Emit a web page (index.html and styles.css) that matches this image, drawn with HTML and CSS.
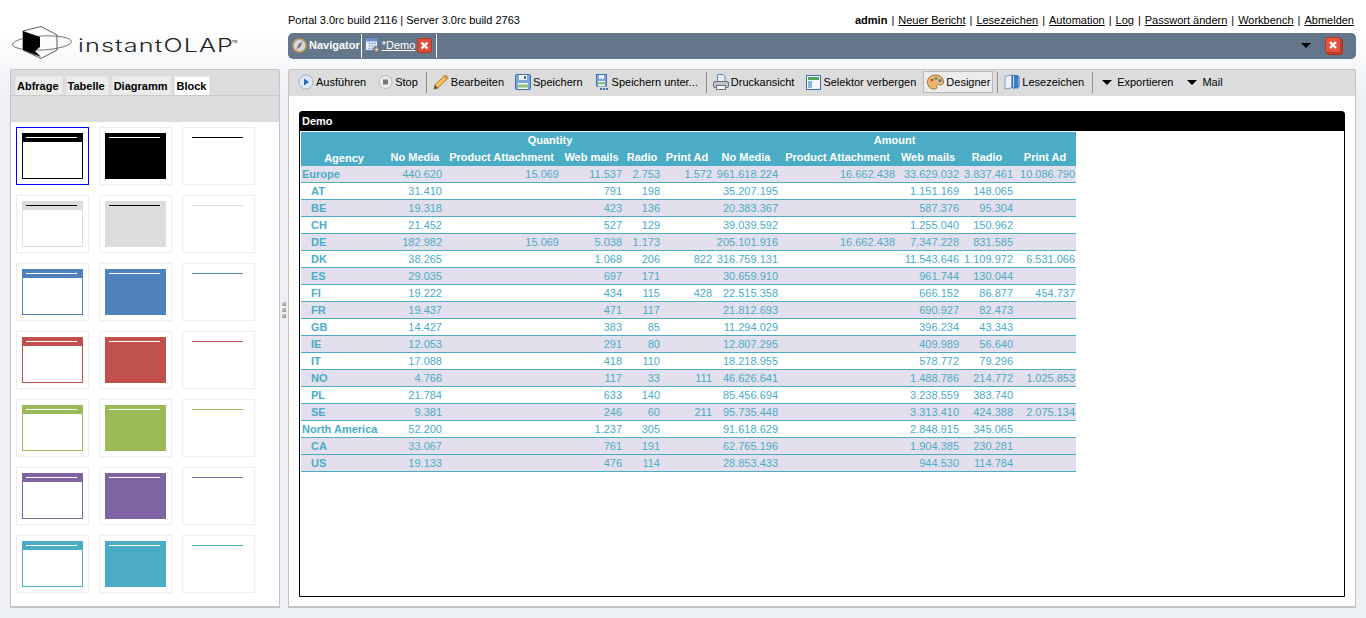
FILE: index.html
```html
<!DOCTYPE html>
<html lang="de">
<head>
<meta charset="utf-8">
<title>instantOLAP</title>
<link rel="stylesheet" href="styles.css">
</head>
<body>
<div class="app">
  <div class="logo">
    <svg class="logo-mark" width="62" height="36" viewBox="0 0 62 36">
      <path d="M11 5 L29 0.5 L45 9 L45 24 L29 32.5 L11 24 Z" fill="none" stroke="#333" stroke-width="0.8"/>
      <ellipse cx="30" cy="17" rx="29.5" ry="7" fill="none" stroke="#555" stroke-width="0.8" transform="rotate(-3 30 17)"/>
      <path d="M11 5 L28 11 L28 21 L23 25 L29 31 L11 24 Z" fill="#000"/>
    </svg>
    <span class="logo-text">instantOLAP</span><span class="logo-tm">TM</span>
  </div>
  <div class="head">
    <div class="topline">
      <span>Portal 3.0rc build 2116 | Server 3.0rc build 2763</span>
      <nav class="links">
        <b>admin</b><i class="sep">|</i><a href="#">Neuer Bericht</a><i class="sep">|</i><a href="#">Lesezeichen</a><i class="sep">|</i><a href="#">Automation</a><i class="sep">|</i><a href="#">Log</a><i class="sep">|</i><a href="#">Passwort ändern</a><i class="sep">|</i><a href="#">Workbench</a><i class="sep">|</i><a href="#">Abmelden</a>
      </nav>
    </div>
    <div class="navbar">
      <svg class="nav-ico" width="15" height="15" viewBox="0 0 15 15"><circle cx="7.5" cy="7.5" r="6.5" fill="#cfd8e6" stroke="#c79a52" stroke-width="1.6"/><path d="M10.5 3.5 L8.5 8.5 L4.5 11.5 L6.5 6.5 Z" fill="#8a6a3a"/></svg>
      <span class="nav-title">Navigator</span>
      <i class="nav-sep"></i>
      <svg class="nav-ico2" width="15" height="16" viewBox="0 0 15 16"><rect x="0.5" y="1.5" width="12" height="12" fill="#eef3fb" stroke="#5c7fb8"/><rect x="0.5" y="1.5" width="12" height="3" fill="#6f93c9"/><path d="M3 6.5h8M3 9h8M3 11.5h8M4.5 5v8M7.5 5v8M10 5v8" stroke="#9fb4d6" stroke-width="0.8"/><circle cx="11.5" cy="12.5" r="3" fill="#9a9a9a" stroke="#666"/><circle cx="11.5" cy="12.5" r="1" fill="#ddd"/></svg>
      <a class="nav-tab" href="#">*Demo</a>
      <svg class="close" width="15" height="15" viewBox="0 0 15 15"><rect x="0.5" y="0.5" width="14" height="14" rx="1.5" fill="#dd4b39" stroke="#b5392a"/><path d="M4.5 4.5 L10.5 10.5 M10.5 4.5 L4.5 10.5" stroke="#fff" stroke-width="2.4"/></svg>
      <i class="nav-sep sep-b"></i>
      <i class="arrow nav-arrow"></i>
      <svg class="close-big" width="18" height="18" viewBox="0 0 18 18"><rect x="2.5" y="2.5" width="15" height="15" rx="1.5" fill="#c9402f" stroke="#a5321f"/><rect x="0.5" y="0.5" width="15" height="15" rx="1.5" fill="#e2553f" stroke="#b5392a"/><path d="M5 5 L11 11 M11 5 L5 11" stroke="#fff" stroke-width="2.4"/></svg>
    </div>
  </div>

  <aside class="panel side">
    <div class="tabs">
      <span class="tab">Abfrage</span><span class="tab">Tabelle</span><span class="tab">Diagramm</span><span class="tab on">Block</span>
    </div>
    <div class="subbar"></div>
    <div class="thumbs">
      <div class="thumb picked k-black"><div class="mini frame"><i></i></div></div>
      <div class="thumb k-black"><div class="mini solid"><i></i></div></div>
      <div class="thumb k-black"><div class="mini line"><i></i></div></div>
      <div class="thumb k-gray"><div class="mini frame"><i></i></div></div>
      <div class="thumb k-gray"><div class="mini solid"><i></i></div></div>
      <div class="thumb k-gray"><div class="mini line"><i></i></div></div>
      <div class="thumb k-blue"><div class="mini frame"><i></i></div></div>
      <div class="thumb k-blue"><div class="mini solid"><i></i></div></div>
      <div class="thumb k-blue"><div class="mini line"><i></i></div></div>
      <div class="thumb k-red"><div class="mini frame"><i></i></div></div>
      <div class="thumb k-red"><div class="mini solid"><i></i></div></div>
      <div class="thumb k-red"><div class="mini line"><i></i></div></div>
      <div class="thumb k-green"><div class="mini frame"><i></i></div></div>
      <div class="thumb k-green"><div class="mini solid"><i></i></div></div>
      <div class="thumb k-green"><div class="mini line"><i></i></div></div>
      <div class="thumb k-violet"><div class="mini frame"><i></i></div></div>
      <div class="thumb k-violet"><div class="mini solid"><i></i></div></div>
      <div class="thumb k-violet"><div class="mini line"><i></i></div></div>
      <div class="thumb k-teal"><div class="mini frame"><i></i></div></div>
      <div class="thumb k-teal"><div class="mini solid"><i></i></div></div>
      <div class="thumb k-teal"><div class="mini line"><i></i></div></div>
    </div>
  </aside>

  <div class="grip"><i></i><i></i><i></i></div>

  <main class="panel work">
    <div class="toolbar">
      <span class="tool"><svg width="16" height="16" viewBox="0 0 16 16"><circle cx="8" cy="8" r="7" fill="#dfe9f6" stroke="#9db6d8"/><path d="M6 4.5 L11 8 L6 11.5 Z" fill="#2f66ad"/></svg>Ausführen</span>
      <span class="tool"><svg width="15" height="16" viewBox="0 0 15 16"><circle cx="7.5" cy="8" r="6.5" fill="#ececec" stroke="#bbb"/><rect x="5" y="5.5" width="5" height="5" fill="#777"/></svg>Stop</span>
      <i class="tsep"></i>
      <span class="tool tight"><svg width="16" height="16" viewBox="0 0 16 16"><path d="M1 15 L2 11 L11 2 L14 5 L5 14 Z" fill="#f2c25c" stroke="#b9782a"/><path d="M11 2 L12.5 0.8 L15.2 3.5 L14 5 Z" fill="#e9906f" stroke="#b9782a" stroke-width="0.7"/><path d="M1 15 L2 11 L5 14 Z" fill="#5b4632"/></svg>Bearbeiten</span>
      <span class="tool"><svg width="16" height="16" viewBox="0 0 16 16"><rect x="0.5" y="0.5" width="15" height="15" rx="1" fill="#7ea6dc" stroke="#3f6db0"/><rect x="4" y="1" width="8" height="5" fill="#f4f7fb"/><rect x="9" y="2" width="2" height="3" fill="#3f6db0"/><rect x="3" y="9" width="10" height="6" fill="#f4f7fb"/><rect x="3" y="10.5" width="10" height="3" fill="#8cc47a"/></svg>Speichern</span>
      <span class="tool save-as"><svg width="14" height="16" viewBox="0 0 14 16"><rect x="1.5" y="0.5" width="10" height="11.5" fill="#7ea6dc" stroke="#3f6db0"/><rect x="4" y="1" width="5" height="3.5" fill="#f4f7fb"/><rect x="3" y="7" width="7" height="5" fill="#f4f7fb"/><rect x="3" y="8" width="7" height="2.5" fill="#8cc47a"/><path d="M5 14h2v2h-2zM8 14h2v2h-2zM11 14h2v2h-2z" fill="#3f6db0"/></svg>Speichern unter...</span>
      <i class="tsep"></i>
      <span class="tool"><svg width="16" height="16" viewBox="0 0 16 16"><path d="M4.5 0.5 H10 L12 2.5 V8 H4.5 Z" fill="#e6eefb" stroke="#5f86c2"/><rect x="0.5" y="7.5" width="15" height="6" rx="1.5" fill="#bfc3c9" stroke="#6d7278"/><rect x="3.5" y="11.5" width="9" height="4" fill="#f3f3f3" stroke="#6d7278"/></svg>Druckansicht</span>
      <span class="tool"><svg width="15" height="16" viewBox="0 0 15 16"><rect x="0.5" y="1.5" width="14" height="14" fill="#f4f8fd" stroke="#3f6db0"/><rect x="2" y="3" width="11" height="3" fill="#55a05a"/><rect x="2" y="7" width="4" height="7" fill="#8fb3e0"/></svg>Selektor verbergen</span>
      <span class="tool active"><svg width="17" height="16" viewBox="0 0 17 16"><path d="M8.5 1 C13.5 1 16.5 4 16.5 8 C16.5 11.5 13 11 11.5 10.5 C9.5 10 9.5 12.5 10 13 C10.5 14.5 8.5 15 7 15 C3 15 0.5 12 0.5 8 C0.5 4 4 1 8.5 1 Z" fill="#e8b77a" stroke="#a8702f"/><circle cx="5" cy="6" r="1.6" fill="#d94b3a"/><circle cx="9" cy="4.5" r="1.6" fill="#5ba34e"/><circle cx="13" cy="6.5" r="1.5" fill="#3f6db0"/><circle cx="4.5" cy="10.5" r="1.6" fill="#e0c23c"/></svg>Designer</span>
      <i class="tsep"></i>
      <span class="tool"><svg width="16" height="16" viewBox="0 0 16 16"><path d="M1 2.5 L7.5 1 V14 L1 15 Z" fill="#eaf1fb" stroke="#7d9cc8"/><path d="M8.5 1 L15 2.5 V13 L8.5 14 Z" fill="#cfe0f5" stroke="#3f6db0"/><path d="M10 1 H14 V15.5 L12 13.5 L10 15.5 Z" fill="#2f7fc4"/></svg>Lesezeichen</span>
      <i class="tsep"></i>
      <span class="tool menu first"><i class="arrow"></i>Exportieren</span>
      <span class="tool menu"><i class="arrow"></i>Mail</span>
    </div>
    <section class="block">
      <h2 class="block-title">Demo</h2>
      <table class="report">
        <colgroup><col class="c1"><col class="c2"><col class="c3"><col class="c4"><col class="c5"><col class="c6"><col class="c7"><col class="c3"><col class="c8"><col class="c9"><col class="c10"></colgroup>
        <thead>
          <tr><th rowspan="2" class="agency">Agency</th><th colspan="5">Quantity</th><th colspan="5">Amount</th></tr>
          <tr><th>No Media</th><th>Product Attachment</th><th>Web mails</th><th>Radio</th><th>Print Ad</th><th>No Media</th><th>Product Attachment</th><th>Web mails</th><th>Radio</th><th>Print Ad</th></tr>
        </thead>
        <tbody>
          <tr class="alt grp"><th>Europe</th><td>440.620</td><td>15.069</td><td>11.537</td><td>2.753</td><td>1.572</td><td>961.618.224</td><td>16.662.438</td><td>33.629.032</td><td>3.837.461</td><td>10.086.790</td></tr>
          <tr><th>AT</th><td>31.410</td><td></td><td>791</td><td>198</td><td></td><td>35.207.195</td><td></td><td>1.151.169</td><td>148.065</td><td></td></tr>
          <tr class="alt"><th>BE</th><td>19.318</td><td></td><td>423</td><td>136</td><td></td><td>20.383.367</td><td></td><td>587.376</td><td>95.304</td><td></td></tr>
          <tr><th>CH</th><td>21.452</td><td></td><td>527</td><td>129</td><td></td><td>39.039.592</td><td></td><td>1.255.040</td><td>150.962</td><td></td></tr>
          <tr class="alt"><th>DE</th><td>182.982</td><td>15.069</td><td>5.038</td><td>1.173</td><td></td><td>205.101.916</td><td>16.662.438</td><td>7.347.228</td><td>831.585</td><td></td></tr>
          <tr><th>DK</th><td>38.265</td><td></td><td>1.068</td><td>206</td><td>822</td><td>316.759.131</td><td></td><td>11.543.646</td><td>1.109.972</td><td>6.531.066</td></tr>
          <tr class="alt"><th>ES</th><td>29.035</td><td></td><td>697</td><td>171</td><td></td><td>30.659.910</td><td></td><td>961.744</td><td>130.044</td><td></td></tr>
          <tr><th>FI</th><td>19.222</td><td></td><td>434</td><td>115</td><td>428</td><td>22.515.358</td><td></td><td>666.152</td><td>86.877</td><td>454.737</td></tr>
          <tr class="alt"><th>FR</th><td>19.437</td><td></td><td>471</td><td>117</td><td></td><td>21.812.693</td><td></td><td>690.927</td><td>82.473</td><td></td></tr>
          <tr><th>GB</th><td>14.427</td><td></td><td>383</td><td>85</td><td></td><td>11.294.029</td><td></td><td>396.234</td><td>43.343</td><td></td></tr>
          <tr class="alt"><th>IE</th><td>12.053</td><td></td><td>291</td><td>80</td><td></td><td>12.807.295</td><td></td><td>409.989</td><td>56.640</td><td></td></tr>
          <tr><th>IT</th><td>17.088</td><td></td><td>418</td><td>110</td><td></td><td>18.218.955</td><td></td><td>578.772</td><td>79.296</td><td></td></tr>
          <tr class="alt"><th>NO</th><td>4.766</td><td></td><td>117</td><td>33</td><td>111</td><td>46.626.641</td><td></td><td>1.488.786</td><td>214.772</td><td>1.025.853</td></tr>
          <tr><th>PL</th><td>21.784</td><td></td><td>633</td><td>140</td><td></td><td>85.456.694</td><td></td><td>3.238.559</td><td>383.740</td><td></td></tr>
          <tr class="alt"><th>SE</th><td>9.381</td><td></td><td>246</td><td>60</td><td>211</td><td>95.735.448</td><td></td><td>3.313.410</td><td>424.388</td><td>2.075.134</td></tr>
          <tr class="grp"><th>North America</th><td>52.200</td><td></td><td>1.237</td><td>305</td><td></td><td>91.618.629</td><td></td><td>2.848.915</td><td>345.065</td><td></td></tr>
          <tr class="alt"><th>CA</th><td>33.067</td><td></td><td>761</td><td>191</td><td></td><td>62.765.196</td><td></td><td>1.904.385</td><td>230.281</td><td></td></tr>
          <tr class="alt"><th>US</th><td>19.133</td><td></td><td>476</td><td>114</td><td></td><td>28.853.433</td><td></td><td>944.530</td><td>114.784</td><td></td></tr>
        </tbody>
      </table>
    </section>
  </main>
</div>
</body>
</html>
```
FILE: styles.css
```css
* { box-sizing: border-box; }
html, body { margin: 0; height: 618px; overflow: hidden; }
body {
  font: 11px/14px "Liberation Sans", Arial, sans-serif;
  color: #000;
  background: linear-gradient(#fff 0, #fff 30px, #ecf0f5 100px);
}
i { font-style: normal; display: block; }
a { color: #000; }

.app {
  display: grid;
  grid-template-columns: 270px 8px 1fr;
  grid-template-rows: 69px 1fr;
  height: 618px;
  padding: 0 10px 10px;
}

/* header */
.logo {
  grid-column: 1 / 3;
  display: flex;
  align-items: flex-start;
  padding: 26px 0 0 2px;
}
.logo-mark { flex: none; }
.logo-text {
  flex: none;
  width: 154px;
  margin: 9px 0 0 4px;
  font: 300 18px/22px Inter, "Liberation Sans", sans-serif;
  letter-spacing: 0.8px;
  color: #222;
  white-space: nowrap;
  transform: scaleX(1.4);
  transform-origin: left center;
}
.logo-tm { font-size: 3.5px; line-height: 6px; margin: 13px 0 0 0; color: #555; font-weight: 700; }

.head { display: flex; flex-direction: column; }
.topline {
  height: 33px;
  display: flex;
  justify-content: space-between;
  align-items: flex-start;
  padding: 13px 2px 0 0;
}
.links { display: flex; }
.sep { margin: 0 4px; }
.navbar {
  height: 26px;
  background: #64778a;
  border-radius: 5px;
  display: flex;
  align-items: center;
  padding: 0 0 2px 4px;
  color: #fff;
  font-weight: 700;
}
.nav-title { margin-left: 2px; }
.nav-sep { width: 1px; height: 24px; margin: 2px 3px 0 1px; background: #fff; }
.sep-b { margin-left: 4px; }
.nav-ico2 { margin-right: 2px; }
.nav-tab { color: #fff; font-weight: 400; margin-right: 2px; }
.close { flex: none; }
.arrow {
  width: 0; height: 0;
  border: 5px solid transparent;
  border-top: 5px solid #000;
  border-bottom: 0;
}
.nav-arrow { margin-left: auto; margin-right: 14px; }
.close-big { margin: 2px 13px 0 0; }

/* panels */
.panel { background: #fff; border: 1px solid #c4c4c4; border-bottom-width: 2px; border-radius: 2px 2px 0 0; min-height: 0; }
.side { display: flex; flex-direction: column; }
.tabs {
  height: 26px;
  background: #dcdcdc;
  border-bottom: 1px solid #cbcbcb;
  display: flex;
  align-items: flex-end;
  gap: 3px;
  padding-left: 4px;
}
.tab {
  height: 19px;
  padding: 2px 3px 0 1px;
  background: #ebebeb;
  border: 1px solid #e4e4e4;
  border-bottom: 0;
  font-weight: 700;
}
.tab.on { background: #fff; }
.subbar { height: 26px; background: #dcdcdc; }
.thumbs {
  display: grid;
  grid-template-columns: repeat(3, 73px);
  grid-auto-rows: 58px;
  gap: 10px;
  padding: 5px 0 0 5px;
}
.thumb { border: 1px solid #eee; padding: 5px; }
.thumb.picked { border-color: #00f; }
.mini { width: 61px; height: 46px; }
.mini i { width: 51px; height: 1px; margin-left: 4px; }
.mini.frame { border: 1px solid var(--c); background: linear-gradient(var(--c) 8px, #fff 8px); padding-top: 3px; }
.mini.frame i { margin-left: 3px; background: var(--l); }
.mini.solid { background: var(--c); padding-top: 4px; }
.mini.solid i { background: var(--l); }
.mini.line { padding-top: 4px; }
.mini.line i { background: var(--c); }
.k-black { --c: #000; --l: #fff; }
.k-gray { --c: #dcdcdc; --l: #000; }
.k-blue { --c: #4f81bd; --l: #fff; }
.k-red { --c: #c0504d; --l: #fff; }
.k-green { --c: #9bbb59; --l: #fff; }
.k-violet { --c: #8064a2; --l: #fff; }
.k-teal { --c: #4bacc6; --l: #fff; }

.grip { display: flex; flex-direction: column; align-items: center; justify-content: center; gap: 2px; padding-bottom: 58px; }
.grip i { width: 4px; height: 4px; background: linear-gradient(135deg, #ddd, #888); }

/* toolbar */
.work { display: flex; flex-direction: column; min-width: 0; }
.toolbar {
  height: 26px;
  flex: none;
  background: #dcdcdc;
  display: flex;
  align-items: center;
  padding: 0 0 2px 9px;
}
.tool { display: flex; align-items: center; gap: 2px; margin-right: 12px; white-space: nowrap; }
.tool.tight { margin-right: 11px; }
.tool svg { flex: none; }
.tool.save-as { gap: 3px; }
.tool.active {
  height: 22px;
  margin: 0 8px 0 -5px;
  padding: 0 2px 0 3px;
  background: #ececec;
  border: 1px solid #fff;
  outline: 1px solid #b8b8b8;
  outline-offset: -1px;
}
.tsep { width: 1px; height: 21px; background: #8f8f8f; margin: 0 6px 0 -4px; }
.tool.menu { gap: 5px; margin-right: 14px; }
.tool.menu.first { margin-left: 3px; }

/* report block */
.block {
  flex: none;
  height: 486px;
  margin: 15px 10px 0;
  border: 1px solid #000;
  border-radius: 3px 3px 0 0;
}
.block-title {
  margin: 0 0 1px;
  height: 19px;
  background: #000;
  color: #fff;
  font: 700 11px/19px "Liberation Sans", Arial, sans-serif;
  padding-left: 2px;
}
.report { table-layout: fixed; width: 775px; margin-left: 1px; border-collapse: separate; border-spacing: 0; color: #4bacc6; }
.c1 { width: 86px; } .c2 { width: 56px; } .c3 { width: 117px; } .c4 { width: 63px; } .c5 { width: 38px; }
.c6 { width: 52px; } .c7 { width: 66px; } .c8 { width: 64px; } .c9 { width: 54px; } .c10 { width: 62px; }
.report thead th { background: #4bacc6; color: #fff; height: 17px; padding: 0 0 1px; text-align: center; white-space: nowrap; font-weight: 700; }
.report .agency { vertical-align: bottom; padding-bottom: 1px; }
.report tbody th, .report tbody td { height: 17px; padding: 0; border-bottom: 1px solid #4bacc6; white-space: nowrap; }
.report tbody th { text-align: left; padding-left: 10px; font-weight: 700; }
.report tbody td { text-align: right; padding-right: 1px; font-weight: 400; }
.report .grp th { padding-left: 1px; }
.report .alt th, .report .alt td { background: #e3dfec; }
```
